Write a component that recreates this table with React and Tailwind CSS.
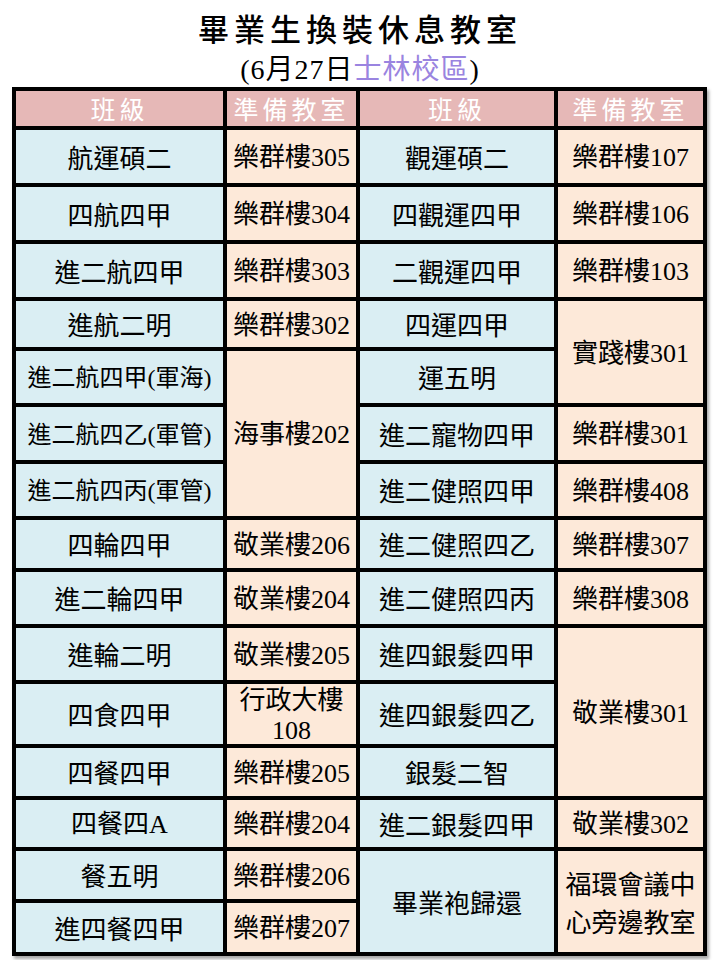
const BLUE = "bg-[#daeef3]";
const PEACH = "bg-[#fde9d9]";

// latin bits (digits, parens, A) get a Times-like face
function fmt(text) {
  return text.split(/([0-9A-Za-z()]+)/).map((part, i) =>
    /^[0-9A-Za-z()]+$/.test(part) ? (
      <span key={i} className="font-['Liberation_Serif','Times_New_Roman',serif]">
        {part}
      </span>
    ) : (
      part
    )
  );
}

function Cell({ lines, tone, span = "", size = "text-[26px] leading-[30px]" }) {
  return (
    <div
      className={`${tone} ${span} ${size} flex flex-col items-center justify-center text-center text-black`}
    >
      {lines.map((l) => (
        <div key={l}>{fmt(l)}</div>
      ))}
    </div>
  );
}

function Head({ children }) {
  return (
    <div className="bg-[#e6b8b7] flex items-center justify-center text-[25px] tracking-[4px] text-white leading-none">
      {children}
    </div>
  );
}

const SMALL = "text-[24px] leading-[30px]";
const B = (t, span, size) => ({ t: [t], tone: BLUE, span, size });
const P = (t, span, size) => ({ t: Array.isArray(t) ? t : [t], tone: PEACH, span, size });

const cells = [
  B("航運碩二"), P("樂群樓305"), B("觀運碩二"), P("樂群樓107"),
  B("四航四甲"), P("樂群樓304"), B("四觀運四甲"), P("樂群樓106"),
  B("進二航四甲"), P("樂群樓303"), B("二觀運四甲"), P("樂群樓103"),
  B("進航二明"), P("樂群樓302"), B("四運四甲"), P("實踐樓301", "row-span-2"),
  B("進二航四甲(軍海)", "", SMALL), P("海事樓202", "row-span-3"), B("運五明"),
  B("進二航四乙(軍管)", "", SMALL), B("進二寵物四甲"), P("樂群樓301"),
  B("進二航四丙(軍管)", "", SMALL), B("進二健照四甲"), P("樂群樓408"),
  B("四輪四甲"), P("敬業樓206"), B("進二健照四乙"), P("樂群樓307"),
  B("進二輪四甲"), P("敬業樓204"), B("進二健照四丙"), P("樂群樓308"),
  B("進輪二明"), P("敬業樓205"), B("進四銀髮四甲"), P("敬業樓301", "row-span-3"),
  B("四食四甲"), P(["行政大樓", "108"]), B("進四銀髮四乙"),
  B("四餐四甲"), P("樂群樓205"), B("銀髮二智"),
  B("四餐四A"), P("樂群樓204"), B("進二銀髮四甲"), P("敬業樓302"),
  B("餐五明"), P("樂群樓206"), B("畢業袍歸還", "row-span-2"),
  P(["福環會議中", "心旁邊教室"], "row-span-2", "text-[26px] leading-[38px]"),
  B("進四餐四甲"), P("樂群樓207"),
];

export default function App() {
  return (
    <div className="w-[720px] h-[960px] bg-white font-['Noto_Sans_CJK_TC',sans-serif]">
      {/* title */}
      <div className="pt-[8px] h-[48px] text-center text-[31px] font-medium leading-[40px] tracking-[5px] text-black">
        畢業生換裝休息教室
      </div>
      <div className="h-[39px] text-center text-[28px] leading-[39px] tracking-[1px] text-black">
        {fmt("(6月27日")}
        <span className="text-[#9a84e0]">士林校區</span>
        {fmt(")")}
      </div>

      {/* table */}
      <div className="ml-[12px] w-fit grid grid-cols-[207px_129px_194px_145px] grid-rows-[35px_53px_53px_53px_46px_52px_53px_52px_48px_52px_52px_60px_48px_47px_48px_49px] gap-[4px] p-[4px] bg-black shadow-[2px_3px_3px_rgba(0,0,0,0.35)]">
        <Head>班級</Head>
        <Head>準備教室</Head>
        <Head>班級</Head>
        <Head>準備教室</Head>

        {cells.map((c, i) => (
          <Cell key={i} lines={c.t} tone={c.tone} span={c.span} size={c.size} />
        ))}
      </div>
    </div>
  );
}
